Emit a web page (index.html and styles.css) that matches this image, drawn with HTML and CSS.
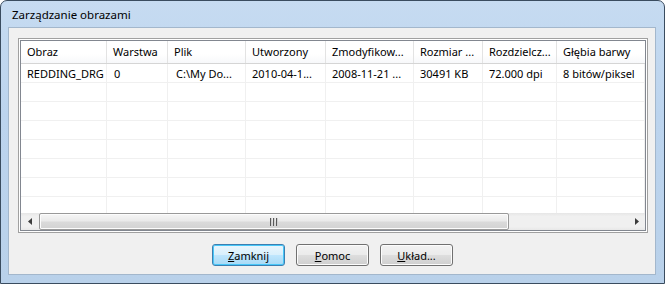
FILE: index.html
```html
<!DOCTYPE html>
<html lang="pl">
<head>
<meta charset="utf-8">
<title>Zarządzanie obrazami</title>
<link rel="stylesheet" href="styles.css">
</head>
<body>
<div class="window">
  <div class="titlebar"><span class="title">Zarządzanie obrazami</span></div>
  <div class="client">
    <div class="listframe">
      <div class="listview">
        <div class="header grid">
          <div class="hcell">Obraz</div>
          <div class="hcell">Warstwa</div>
          <div class="hcell">Plik</div>
          <div class="hcell">Utworzony</div>
          <div class="hcell">Zmodyfikow...</div>
          <div class="hcell">Rozmiar ...</div>
          <div class="hcell">Rozdzielcz...</div>
          <div class="hcell">Głębia barwy</div>
        </div>
        <div class="body">
          <div class="row grid">
            <div class="cell">REDDING_DRG</div>
            <div class="cell">0</div>
            <div class="cell indent">C:\My Do...</div>
            <div class="cell">2010-04-1...</div>
            <div class="cell">2008-11-21 ...</div>
            <div class="cell">30491 KB</div>
            <div class="cell">72.000 dpi</div>
            <div class="cell">8 bitów/piksel</div>
          </div>
          <div class="row grid"><div class="cell"></div><div class="cell"></div><div class="cell"></div><div class="cell"></div><div class="cell"></div><div class="cell"></div><div class="cell"></div><div class="cell"></div></div>
          <div class="row grid"><div class="cell"></div><div class="cell"></div><div class="cell"></div><div class="cell"></div><div class="cell"></div><div class="cell"></div><div class="cell"></div><div class="cell"></div></div>
          <div class="row grid"><div class="cell"></div><div class="cell"></div><div class="cell"></div><div class="cell"></div><div class="cell"></div><div class="cell"></div><div class="cell"></div><div class="cell"></div></div>
          <div class="row grid"><div class="cell"></div><div class="cell"></div><div class="cell"></div><div class="cell"></div><div class="cell"></div><div class="cell"></div><div class="cell"></div><div class="cell"></div></div>
          <div class="row grid"><div class="cell"></div><div class="cell"></div><div class="cell"></div><div class="cell"></div><div class="cell"></div><div class="cell"></div><div class="cell"></div><div class="cell"></div></div>
          <div class="row grid"><div class="cell"></div><div class="cell"></div><div class="cell"></div><div class="cell"></div><div class="cell"></div><div class="cell"></div><div class="cell"></div><div class="cell"></div></div>
          <div class="row grid"><div class="cell"></div><div class="cell"></div><div class="cell"></div><div class="cell"></div><div class="cell"></div><div class="cell"></div><div class="cell"></div><div class="cell"></div></div>
        </div>
        <div class="hscroll">
          <div class="sb-btn">
            <svg width="4" height="7" viewBox="0 0 4 7"><path d="M4 0 L0 3.5 L4 7 Z" fill="#3c3c3c"/></svg>
          </div>
          <div class="sb-track">
            <div class="sb-thumb"><span class="grip"></span><span class="grip"></span><span class="grip"></span></div>
          </div>
          <div class="sb-btn">
            <svg width="4" height="7" viewBox="0 0 4 7"><path d="M0 0 L4 3.5 L0 7 Z" fill="#3c3c3c"/></svg>
          </div>
        </div>
      </div>
    </div>
    <div class="buttons">
      <button class="btn default"><u>Z</u>amknij</button>
      <button class="btn"><u>P</u>omoc</button>
      <button class="btn"><u>U</u>kład...</button>
    </div>
  </div>
</div>
</body>
</html>
```

FILE: styles.css
```css
* { box-sizing: border-box; }
html, body { margin: 0; padding: 0; }
body {
  background: #ffffff;
  font-family: "Noto Sans", "Open Sans", sans-serif;
  font-size: 11px;
  color: #000;
}
.window {
  width: 665px;
  height: 284px;
  border: 1px solid #3a4c5f;
  border-radius: 7px 7px 0 0;
  background: linear-gradient(to bottom, #c6dbf1 0%, #bcd4ee 40%, #b9d1ea 100%);
  padding: 0 8px 8px 7px;
  display: flex;
  flex-direction: column;
}
.titlebar {
  height: 26px;
  display: flex;
  align-items: center;
  padding-left: 4px;
  padding-top: 1px;
}
.title {
  font-size: 11.5px;
  color: #000;
}
.client {
  flex: 1;
  background: #f0f0f0;
  border: 1px solid #a3b7cc;
  padding: 10px 7px 0 9px;
  display: flex;
  flex-direction: column;
}
.listframe {
  border: 1px solid #a0a0a0;
  padding: 1px;
  background: #ffffff;
  height: 195px;
}
.listview {
  border: 1px solid #828790;
  background: #ffffff;
  height: 100%;
  display: flex;
  flex-direction: column;
}
.grid {
  display: grid;
  grid-template-columns: 86px 61px 78px 80px 88px 69px 74px 1fr;
}
.header {
  height: 23px;
  border-bottom: 1px solid #d5d5d5;
  background: linear-gradient(to bottom, #ffffff 0%, #ffffff 60%, #f7f8fa 100%);
}
.hcell {
  border-right: 1px solid #e3e3e3;
  padding-left: 6px;
  line-height: 22px;
  white-space: nowrap;
  overflow: hidden;
}
.hcell:last-child { border-right: none; }
.body {
  height: 149px;
  overflow: hidden;
}
.row {
  height: 19px;
  border-bottom: 1px solid #f0f0f0;
}
.cell {
  border-right: 1px solid #f0f0f0;
  padding-left: 6px;
  line-height: 19px;
  white-space: nowrap;
  overflow: hidden;
}
.cell:nth-child(2) { padding-left: 7px; }
.cell.indent { padding-left: 8px; }
.hscroll {
  height: 17px;
  display: flex;
  background: linear-gradient(to bottom, #e6e6e6 0%, #f0f0f0 20%, #f0f0f0 80%, #e8e8e8 100%);
}
.sb-btn {
  width: 17px;
  display: flex;
  align-items: center;
  justify-content: center;
}
.sb-track {
  flex: 1;
  display: flex;
  padding: 0 0 0 1px;
}
.sb-thumb {
  width: 470px;
  height: 17px;
  border: 1px solid #999999;
  border-radius: 2px;
  background: linear-gradient(to bottom, #f6f6f6 0%, #eaeaea 45%, #dadada 55%, #d2d2d2 100%);
  display: flex;
  align-items: center;
  justify-content: center;
  gap: 1px;
  box-shadow: inset 0 0 0 1px #fcfcfc;
}
.grip {
  box-sizing: content-box;
  width: 1px;
  height: 8px;
  background: #5a5a5a;
  border-right: 1px solid #cfcfcf;
}
.buttons {
  margin-top: 11px;
  display: flex;
  justify-content: center;
  gap: 11px;
  padding-right: 1px;
}
.btn {
  width: 73px;
  height: 22px;
  border: 1px solid #707070;
  border-radius: 3px;
  background: linear-gradient(to bottom, #f2f2f2 0%, #ebebeb 48%, #dddddd 52%, #cfcfcf 100%);
  box-shadow: inset 0 0 0 1px #fcfcfc;
  font-family: "Noto Sans", "Open Sans", sans-serif;
  font-size: 11px;
  color: #000;
  padding: 0;
}
.btn.default {
  border-color: #3c7fb1;
  background: linear-gradient(to bottom, #eaf6fd 0%, #d9f0fc 48%, #bee6fd 52%, #a7d9f5 100%);
  box-shadow: inset 0 0 0 1px #48c7f8;
}
```
